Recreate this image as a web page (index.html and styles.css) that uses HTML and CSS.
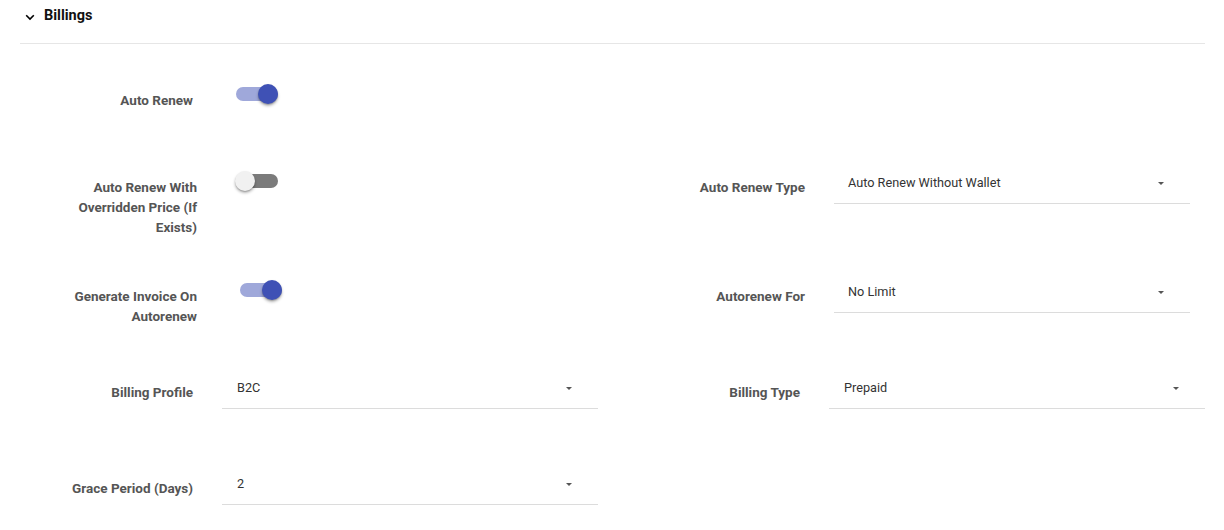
FILE: index.html
```html
<!DOCTYPE html>
<html>
<head>
<meta charset="utf-8">
<link rel="stylesheet" href="styles.css">
</head>
<body>
<div class="section">
  <div class="header">
    <svg class="chevron" width="12" height="12" viewBox="0 0 12 12"><path d="M2.2 4.2 L6 8 L9.8 4.2" fill="none" stroke="#000" stroke-width="1.6"/></svg>
    <span class="title">Billings</span>
  </div>
  <div class="body">
    <div class="row row-a">
      <div class="field">
        <div class="label">Auto Renew</div>
        <div class="toggle on"><span class="track"></span><span class="thumb"></span></div>
      </div>
    </div>
    <div class="row row-b">
      <div class="field field-wrap">
        <div class="label"><span class="wrap">Auto Renew With Overridden Price (If Exists)</span></div>
        <div class="toggle off"><span class="track"></span><span class="thumb"></span></div>
      </div>
      <div class="field field-right">
        <div class="label">Auto Renew Type</div>
        <div class="select"><span class="value">Auto Renew Without Wallet</span><span class="arrow"></span></div>
      </div>
    </div>
    <div class="row row-c">
      <div class="field field-wrap">
        <div class="label"><span class="wrap">Generate Invoice On Autorenew</span></div>
        <div class="toggle on shift"><span class="track"></span><span class="thumb"></span></div>
      </div>
      <div class="field field-right">
        <div class="label">Autorenew For</div>
        <div class="select"><span class="value">No Limit</span><span class="arrow"></span></div>
      </div>
    </div>
    <div class="row row-d">
      <div class="field">
        <div class="label">Billing Profile</div>
        <div class="select"><span class="value">B2C</span><span class="arrow"></span></div>
      </div>
      <div class="field field-right2">
        <div class="label">Billing Type</div>
        <div class="select"><span class="value">Prepaid</span><span class="arrow"></span></div>
      </div>
    </div>
    <div class="row row-e">
      <div class="field">
        <div class="label">Grace Period (Days)</div>
        <div class="select"><span class="value">2</span><span class="arrow"></span></div>
      </div>
    </div>
  </div>
</div>
</body>
</html>
```
FILE: styles.css
```css
* { box-sizing: border-box; }
html, body { margin: 0; padding: 0; background: #fff; }
body { font-family: Roboto, "Liberation Sans", Arial, sans-serif; width: 1224px; height: 530px; overflow: hidden; }

.section { padding: 0 19px 0 20px; }

.header {
  height: 44px;
  border-bottom: 1px solid #e6e6e6;
  display: flex;
  align-items: flex-start;
  padding-top: 7px;
}
.chevron { margin: 4px 0 0 4px; }
.title { font-size: 14.5px; font-weight: 700; color: #111; margin-left: 8px; line-height: 18px; }

.body { padding-top: 46px; }

.row { display: flex; align-items: flex-start; height: 96px; }
.row-a { height: 87px; }
.row-b { height: 109px; }
.row-e { height: auto; }

.field { display: flex; align-items: flex-start; width: 592px; flex: none; }

.label {
  width: 173px;
  text-align: right;
  font-size: 13.5px;
  font-weight: 700;
  color: #555;
  line-height: 20px;
  flex: none;
}
.field-wrap .label { width: 177px; display: flex; justify-content: flex-end; }
.wrap { display: block; max-width: 136px; text-align: right; }

.select {
  margin-left: 29px;
  margin-top: -4px;
  width: 376px;
  height: 31px;
  border-bottom: 1px solid #dcdcdc;
  display: flex;
  align-items: flex-start;
  justify-content: space-between;
  padding: 0 26px 0 15px;
  flex: none;
}
.value { font-size: 12.7px; color: #333; line-height: 20px; }
.arrow {
  margin-top: 9px;
  width: 0; height: 0;
  border-left: 3px solid transparent;
  border-right: 3px solid transparent;
  border-top: 3px solid #555;
}

.field-right { width: auto; margin-left: 0; }
.field-right .label { width: 193px; }
.field-right .select { width: 356px; padding: 0 26px 0 14px; }

.field-right2 { width: auto; margin-left: 15px; }
.field-right2 .label { width: 173px; }
.field-right2 .select { padding: 0 26px 0 15px; }

.toggle {
  position: relative;
  margin-top: -6px;
  width: 42px;
  height: 20px;
  flex: none;
}
.field .toggle { margin-left: 43px; }
.field-wrap .toggle { margin-left: 39px; }
.field-wrap .toggle.shift { margin-left: 43px; }
.track {
  position: absolute;
  left: 0; top: 3px;
  width: 42px; height: 14px;
  border-radius: 7px;
}
.thumb {
  position: absolute;
  top: 0;
  width: 20px; height: 20px;
  border-radius: 50%;
  box-shadow: 0 2px 3px rgba(0,0,0,0.3), 0 1px 1px rgba(0,0,0,0.15);
}
.toggle.on .track { background: #9fa8da; }
.toggle.on .thumb { left: 22px; background: #3f51b5; }
.toggle.off .track { background: #7b7b7b; }
.toggle.off .thumb { left: -1px; background: #f1f1f1; }
```
